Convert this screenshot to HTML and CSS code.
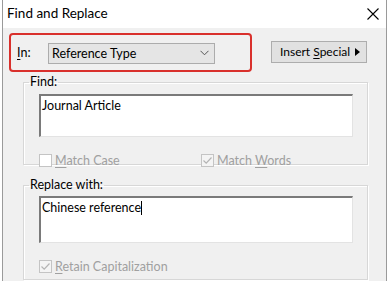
FILE: index.html
```html
<!DOCTYPE html>
<html lang="en">
<head>
    <meta charset="UTF-8">
    <meta name="viewport" content="width=device-width, initial-scale=1.0">
    <title>Find and Replace</title>
    <link rel="stylesheet" href="styles.css">
</head>
<body>

    <div class="window">
        <div class="titlebar">
            <span class="title">Find and Replace</span>
            <svg class="close" width="12" height="12" viewBox="0 0 12 12">
                <path d="M0.5 0.5 L11.5 11.5 M11.5 0.5 L0.5 11.5" stroke="#000" stroke-width="1.1" fill="none"/>
            </svg>
        </div>

        <div class="content">
            <div class="top-row">
                <div class="in-field">
                    <span class="in-label"><u>I</u>n:</span>
                    <div class="select">
                        <span>Reference Type</span>
                        <svg width="9" height="6" viewBox="0 0 9 6">
                            <path d="M0.5 0.8 L4.5 4.8 L8.5 0.8" stroke="#555" stroke-width="1" fill="none"/>
                        </svg>
                    </div>
                </div>
                <button class="insert-btn" type="button">
                    <span>Insert <u>S</u>pecial</span>
                    <svg width="5" height="8" viewBox="0 0 5 8"><path d="M0 0 L5 4 L0 8 Z" fill="#000"/></svg>
                </button>
            </div>

            <fieldset class="group find-group">
                <legend>Find:</legend>
                <div class="textbox find-box">Journal Article</div>
                <div class="checks">
                    <label class="check">
                        <span class="box"></span>
                        <span><u>M</u>atch Case</span>
                    </label>
                    <label class="check">
                        <span class="box checked">
                            <svg width="11" height="11" viewBox="0 0 11 11"><path d="M1.5 5.5 L4.2 8.2 L9.5 2.5" stroke="#b4b4b4" stroke-width="1.2" fill="none"/></svg>
                        </span>
                        <span>Match <u>W</u>ords</span>
                    </label>
                </div>
            </fieldset>

            <fieldset class="group replace-group">
                <legend>Replace with:</legend>
                <div class="textbox replace-box">Chinese reference<span class="caret"></span></div>
                <div class="checks">
                    <label class="check">
                        <span class="box checked">
                            <svg width="11" height="11" viewBox="0 0 11 11"><path d="M1.5 5.5 L4.2 8.2 L9.5 2.5" stroke="#b4b4b4" stroke-width="1.2" fill="none"/></svg>
                        </span>
                        <span><u>R</u>etain Capitalization</span>
                    </label>
                </div>
            </fieldset>
        </div>
    </div>

</body>
</html>
```

FILE: styles.css
```css
body {
    margin: 0;
    background-color: #ffffff;
    font-family: Lato, "Noto Sans", Arial, sans-serif;
    font-size: 12.5px;
    color: #000;
    overflow: hidden;
}
u {
    text-decoration: underline;
    text-underline-offset: 2px;
}
.window {
    margin-left: 2px;
    width: 383px;
    height: 281px;
    border-left: 1px solid #9a9a9a;
    border-right: 1px solid #9a9a9a;
    background-color: #f0f0f0;
}
.titlebar {
    height: 28px;
    background-color: #ffffff;
    display: flex;
    align-items: center;
    justify-content: space-between;
    padding: 0 7px 0 4px;
}
.title {
    font-size: 13.5px;
    margin-top: -2px;
}
.close {
    margin-top: -1px;
}
.content {
    padding-top: 5px;
}
.top-row {
    display: flex;
    align-items: center;
}
.in-field {
    margin-left: 6px;
    width: 239px;
    height: 35px;
    border: 2px solid #d9302c;
    border-radius: 4px;
    display: flex;
    align-items: center;
}
.in-label {
    width: 31px;
    padding-left: 6px;
}
.select {
    width: 157px;
    height: 19px;
    border: 1px solid #acacac;
    background-color: #e5e5e5;
    display: flex;
    align-items: center;
    justify-content: space-between;
    padding: 0 5px 0 3px;
    margin-top: 1px;
}
.insert-btn {
    margin-left: 19px;
    margin-top: -2px;
    width: 96px;
    height: 22px;
    border: 1px solid #adadad;
    background-color: #e1e1e1;
    font-family: inherit;
    font-size: 12px;
    padding: 0 0 0 8px;
    display: flex;
    align-items: center;
    gap: 5px;
    white-space: nowrap;
}
.group {
    margin: 0 0 0 20px;
    width: 343px;
    padding: 0;
    border: 1px solid #d7d7d7;
    box-shadow: inset 1px 1px 0 #ffffff, 1px 1px 0 #ffffff;
}
.group legend {
    margin-left: 5px;
    padding: 0 1px;
    line-height: 14px;
}
.find-group {
    margin-top: 3px;
    height: 88px;
}
.replace-group {
    margin-top: 13px;
    height: 100px;
}
.textbox {
    margin-left: 15px;
    width: 310px;
    background-color: #ffffff;
    border: 2px solid #7a7a7a;
    border-right: 1px solid #e3e3e3;
    border-bottom: 1px solid #e3e3e3;
    padding: 2px 0 0 1px;
    line-height: 16px;
}
.find-box {
    margin-top: 5px;
    height: 38px;
}
.replace-box {
    margin-top: 4px;
    height: 42px;
}
.caret {
    display: inline-block;
    width: 1px;
    height: 14px;
    background-color: #000;
    vertical-align: -3px;
}
.checks {
    display: flex;
    margin-left: 15px;
    margin-top: 16px;
}
.check {
    display: flex;
    align-items: center;
    gap: 3px;
    width: 162px;
    color: #a0a0a0;
}
.box {
    width: 11px;
    height: 11px;
    border: 1px solid #c4c4c4;
    background-color: #ffffff;
    display: flex;
}
.box.checked {
    background-color: #f4f4f4;
}
```
